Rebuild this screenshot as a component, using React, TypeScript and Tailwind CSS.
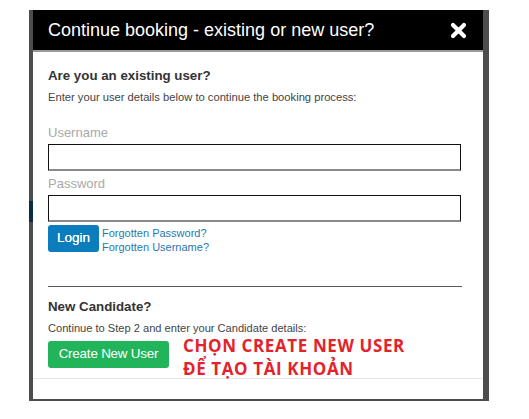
import React from 'react';

const arial = { fontFamily: '"Liberation Sans", Arial, sans-serif' };

const CloseIcon = () => (
  <svg width="17" height="17" viewBox="0 0 17 17" className="block">
    <path d="M3 3 L14 14 M14 3 L3 14" stroke="#fff" strokeWidth="4.2" strokeLinecap="round" />
  </svg>
);

const Field = ({ label, first }: { label: string; first?: boolean }) => (
  <div className={first ? 'mt-[21px]' : 'mt-[5px]'}>
    <div className="text-[13px] leading-[15px] text-[#a9a9a9]">{label}</div>
    <input
      type={label === 'Password' ? 'password' : 'text'}
      className="mt-[4px] block h-[27px] w-[413px] border border-[#111] border-b-2 border-b-[#8a8a8a] bg-white outline-none"
    />
  </div>
);

export default function App() {
  return (
    <div className="h-[419px] w-[529px] bg-white pl-[29px] pt-[10px]" style={arial}>
      <div className="flex h-[391px] w-[460px] border-b-2 border-r-[6px] border-[#4d4d4d] bg-white">
        {/* left edge of the modal, a bit of the page shows through */}
        <div className="w-[4px] shrink-0 bg-[#4d4d4d]">
          <div className="mt-[191px] h-[21px] bg-[#0e2c40]" />
        </div>

        <div className="flex w-[450px] flex-col">
          <div className="flex h-[42px] items-center justify-between border-b-2 border-[#9a9a9a] bg-black pl-[15px] pr-[16px]">
            <h2 className="text-[18px] leading-[20px] text-white">Continue booking - existing or new user?</h2>
            <CloseIcon />
          </div>

          <div className="border-b border-[#e6e6e6] pb-[10px] pl-[15px] pr-[21px] pt-[16px]">
            <h3 className="text-[13.3px] font-bold leading-[16px] text-[#333]">Are you an existing user?</h3>
            <p className="mt-[6px] text-[11.2px] leading-[14px] text-[#444]">
              Enter your user details below to continue the booking process:
            </p>

            <Field label="Username" first />
            <Field label="Password" />

            <div className="mt-[3px] flex h-[27px] items-start">
              <button className="h-[27px] w-[51px] rounded-[3px] bg-[#0b7cbc] text-[13.5px] text-white [text-shadow:0_0_0.4px_#fff]">
                Login
              </button>
              <div className="ml-[3px] mt-[1px] flex flex-col text-[11px] leading-[14px] text-[#1f78b0]">
                <a href="#">Forgotten Password?</a>
                <a href="#">Forgotten Username?</a>
              </div>
            </div>

            <hr className="mt-[34px] w-[414px] border-0 border-t border-[#5a5a5a]" />

            <h3 className="mt-[12px] text-[13.3px] font-bold leading-[16px] text-[#333]">New Candidate?</h3>
            <p className="mt-[6px] text-[11.1px] leading-[14px] text-[#444]">
              Continue to Step 2 and enter your Candidate details:
            </p>

            <div className="relative mt-[6px] h-[27px]">
              <button className="h-[27px] w-[121px] rounded-[3px] bg-[#21b45b] text-[13.4px] tracking-[-0.2px] text-white">
                Create New User
              </button>
              <div
                className="absolute left-[135px] top-[-7px] whitespace-nowrap text-[17px] font-bold leading-[23px] tracking-[0.6px] text-[#e3232b]"
                style={{ fontFamily: '"Open Sans", sans-serif' }}
              >
                <div>CHỌN CREATE NEW USER</div>
                <div>ĐỂ TẠO TÀI KHOẢN</div>
              </div>
            </div>
          </div>
        </div>
      </div>
    </div>
  );
}
